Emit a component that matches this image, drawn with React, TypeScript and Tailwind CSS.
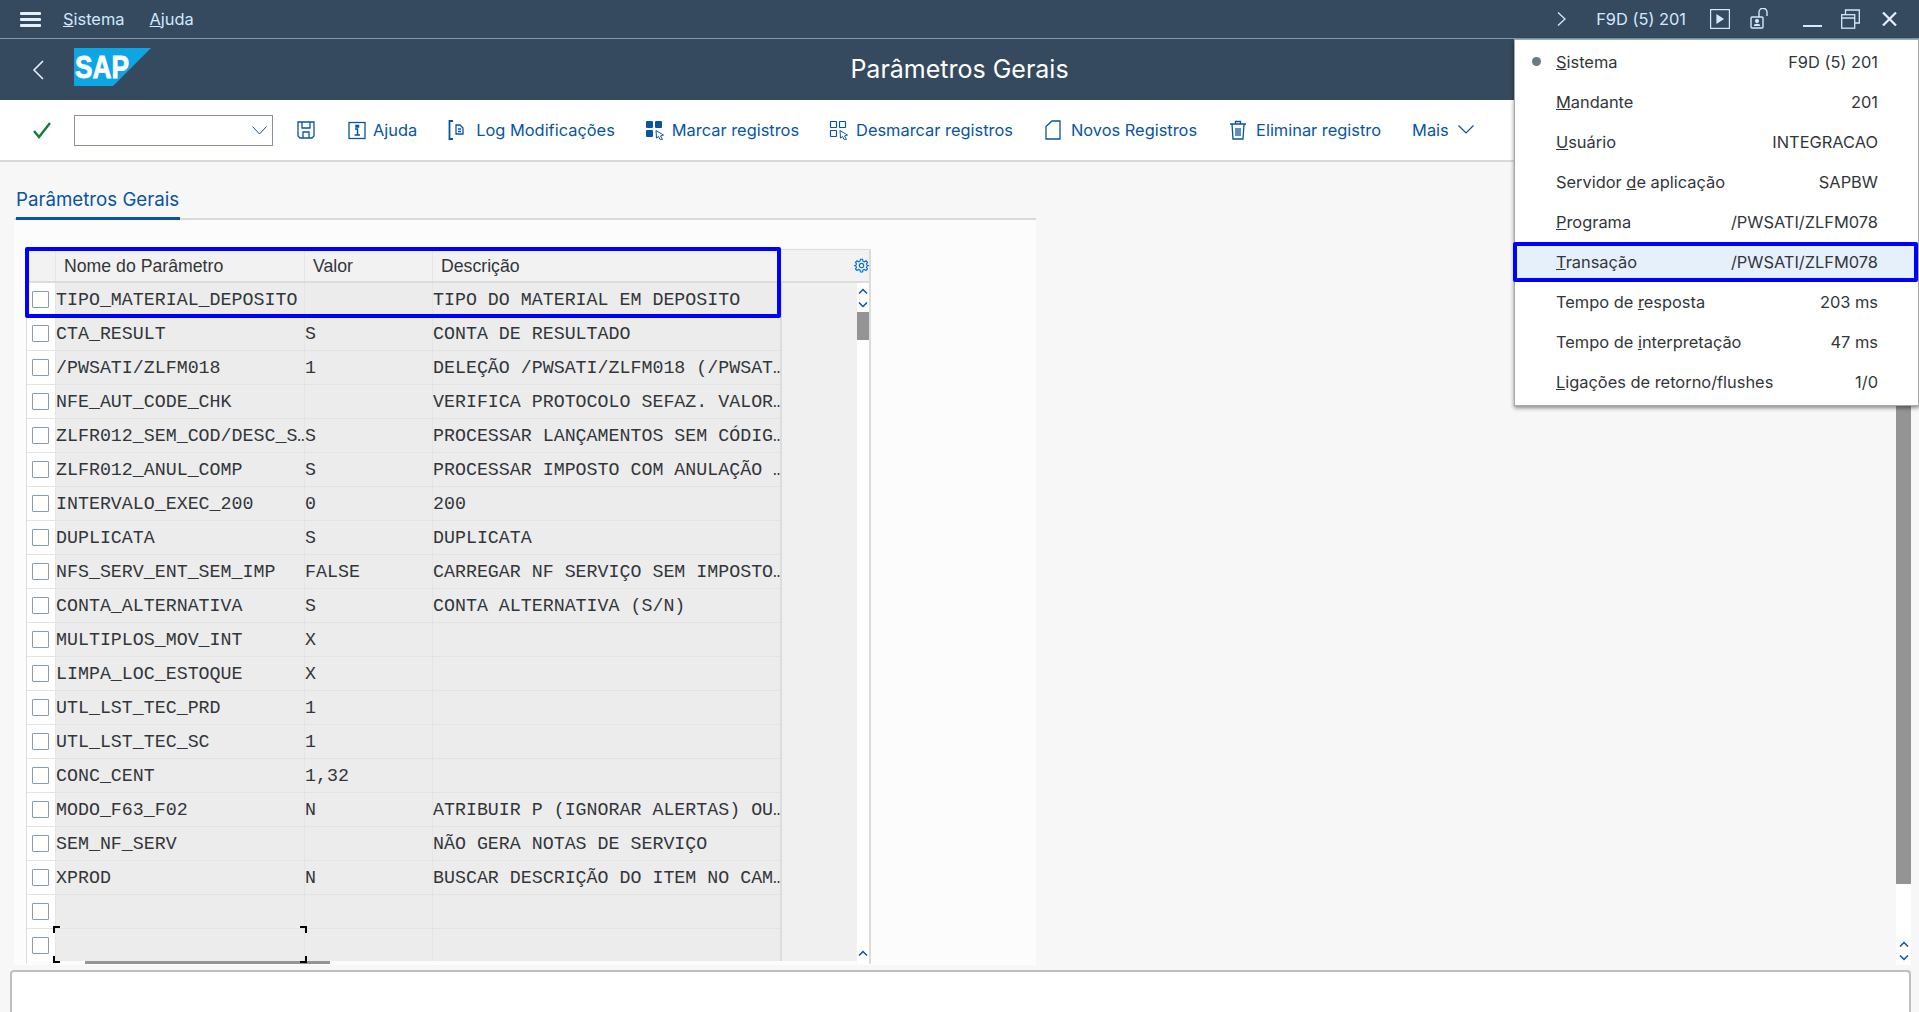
const rows = [
  ["TIPO_MATERIAL_DEPOSITO", "", "TIPO DO MATERIAL EM DEPOSITO"],
  ["CTA_RESULT", "S", "CONTA DE RESULTADO"],
  ["/PWSATI/ZLFM018", "1", "DELEÇÃO /PWSATI/ZLFM018 (/PWSAT…"],
  ["NFE_AUT_CODE_CHK", "", "VERIFICA PROTOCOLO SEFAZ. VALOR…"],
  ["ZLFR012_SEM_COD/DESC_S…", "S", "PROCESSAR LANÇAMENTOS SEM CÓDIG…"],
  ["ZLFR012_ANUL_COMP", "S", "PROCESSAR IMPOSTO COM ANULAÇÃO …"],
  ["INTERVALO_EXEC_200", "0", "200"],
  ["DUPLICATA", "S", "DUPLICATA"],
  ["NFS_SERV_ENT_SEM_IMP", "FALSE", "CARREGAR NF SERVIÇO SEM IMPOSTO…"],
  ["CONTA_ALTERNATIVA", "S", "CONTA ALTERNATIVA (S/N)"],
  ["MULTIPLOS_MOV_INT", "X", ""],
  ["LIMPA_LOC_ESTOQUE", "X", ""],
  ["UTL_LST_TEC_PRD", "1", ""],
  ["UTL_LST_TEC_SC", "1", ""],
  ["CONC_CENT", "1,32", ""],
  ["MODO_F63_F02", "N", "ATRIBUIR P (IGNORAR ALERTAS) OU…"],
  ["SEM_NF_SERV", "", "NÃO GERA NOTAS DE SERVIÇO"],
  ["XPROD", "N", "BUSCAR DESCRIÇÃO DO ITEM NO CAM…"],
  ["", "", ""],
  ["", "", ""],
];

const statusRows: [string, string, string, string][] = [
  ["", "S", "istema", "F9D (5) 201"],
  ["", "M", "andante", "201"],
  ["", "U", "suário", "INTEGRACAO"],
  ["Servidor ", "d", "e aplicação", "SAPBW"],
  ["", "P", "rograma", "/PWSATI/ZLFM078"],
  ["", "T", "ransação", "/PWSATI/ZLFM078"],
  ["Tempo de ", "r", "esposta", "203 ms"],
  ["Tempo de ", "i", "nterpretação", "47 ms"],
  ["", "L", "igações de retorno/flushes", "1/0"],
];

function Chevron({ up, className }: { up?: boolean; className?: string }) {
  return (
    <svg viewBox="0 0 10 6" className={className} fill="none" stroke="#0854a0" strokeWidth="1.5">
      <path d={up ? "M1 5.5 5 1.5l4 4" : "M1 .5l4 4 4-4"} />
    </svg>
  );
}

function ToolIcon({ children }: { children: React.ReactNode }) {
  return (
    <svg viewBox="0 0 20 20" className="w-5 h-5 shrink-0" fill="none" stroke="#0854a0" strokeWidth="1.3">
      {children}
    </svg>
  );
}

function ToolButton({ icon, label, gap, ml }: { icon: React.ReactNode; label: string; gap: string; ml: string }) {
  return (
    <div className={`flex items-center ${gap} ${ml}`}>
      {icon}
      <span className="whitespace-nowrap pt-[1px]">{label}</span>
    </div>
  );
}

function Corner({ className }: { className: string }) {
  return <div className={`absolute w-[7px] h-[7px] border-black ${className}`} />;
}

export default function App() {
  return (
    <div className="relative h-[1012px] w-full overflow-hidden flex flex-col bg-[#f7f7f7] font-['Inter',sans-serif] text-[16.4px]">
      {/* menu bar */}
      <div className="h-[39px] shrink-0 bg-[#354a5f] border-b border-[#7e9ab8] flex items-center text-[#d1e8ff] pr-[22px]">
        <svg viewBox="0 0 21 15" className="w-[21px] h-[15px] ml-[20px]" fill="#e4f0ff">
          <rect width="21" height="3" rx="1" />
          <rect y="6" width="21" height="3" rx="1" />
          <rect y="12" width="21" height="3" rx="1" />
        </svg>
        <span className="ml-[22px]"><u>S</u>istema</span>
        <span className="ml-[25px]"><u>A</u>juda</span>
        <svg viewBox="0 0 9 14" className="w-[9px] h-[14px] ml-auto" fill="none" stroke="#d1e8ff" strokeWidth="1.3">
          <path d="M1 .5 8 7l-7 6.5" />
        </svg>
        <span className="ml-[30px] whitespace-nowrap">F9D (5) 201</span>
        <svg viewBox="0 0 20 20" className="w-5 h-5 ml-[24px]" fill="none" stroke="#d1e8ff" strokeWidth="1.2">
          <rect x=".6" y=".6" width="18.8" height="18.8" />
          <path d="M7 6v8l6-4z" fill="#d1e8ff" />
        </svg>
        <svg viewBox="0 0 21 21" className="w-[21px] h-[21px] ml-[20px] -mt-[2px]" fill="none" stroke="#d1e8ff" strokeWidth="1.4">
          <rect x="1" y="9" width="12" height="11" rx="1" />
          <path d="M9 9V4.5a4 4 0 0 1 8-.5v4" />
          <circle cx="7" cy="13" r="1.4" fill="#d1e8ff" />
          <path d="M4.5 18c0-2 5-2 5 0" fill="#d1e8ff" />
        </svg>
        <div className="w-[19px] h-[2px] bg-[#d1e8ff] ml-[32px] mt-[14px]" />
        <svg viewBox="0 0 19 20" className="w-[19px] h-5 ml-[19px]" fill="none" stroke="#d1e8ff" strokeWidth="1.3">
          <rect x=".7" y="5.7" width="13" height="13.5" />
          <path d="M4.5 5V1h13.8v13H14M1 9h13" />
        </svg>
        <svg viewBox="0 0 15 14" className="w-[15px] h-[14px] ml-[22px]" fill="none" stroke="#e4f0ff" strokeWidth="2.2">
          <path d="M1 .5l13 13M14 .5l-13 13" />
        </svg>
      </div>

      {/* title bar */}
      <div className="relative h-[61px] shrink-0 bg-[#354a5f] flex items-center justify-center">
        <div className="absolute left-[32px] top-[21px]">
          <svg viewBox="0 0 12 20" className="w-3 h-5" fill="none" stroke="#e4f0ff" strokeWidth="1.6">
            <path d="M11 1 2 10l9 9" />
          </svg>
        </div>
        <svg viewBox="0 0 77 38" className="absolute left-[74px] top-[9px] w-[77px] h-[38px]">
          <polygon points="0,0 77,0 39,38 0,38" fill="#0ea5e4" />
          <text x="1" y="30" fill="#fff" stroke="#fff" strokeWidth=".8" fontFamily="Liberation Sans" fontWeight="700" fontSize="32" textLength="54" lengthAdjust="spacingAndGlyphs">SAP</text>
        </svg>
        <span className="text-white text-[25px]">Parâmetros Gerais</span>
      </div>

      {/* toolbar */}
      <div className="h-[62px] shrink-0 bg-white border-b-2 border-[#d9d9d9] flex items-center text-[#0854a0]">
        <svg viewBox="0 0 18 17" className="w-[18px] h-[17px] ml-[33px]" fill="none" stroke="#107e3e" strokeWidth="2.4">
          <path d="M1 9l5 6L17 1" />
        </svg>
        <div className="w-[199px] h-[31px] ml-[23px] bg-white border border-[#89919a] flex items-center justify-end pr-[5px]">
          <svg viewBox="0 0 15 9" className="w-[15px] h-[9px]" fill="none" stroke="#0854a0" strokeWidth="1">
            <path d="M.5 .5 7.5 8l7-7.500" />
          </svg>
        </div>
        <div className="ml-[23px]">
          <ToolIcon>
            <path d="M2 2h16v14l-2 2H4l-2-2zM6 2v6h8V2M7 18v-6h6v6" />
          </ToolIcon>
        </div>
        <ToolButton
          ml="ml-[31px]"
          gap="gap-[6px]"
          label="Ajuda"
          icon={
            <ToolIcon>
              <rect x="2" y="2.500" width="16" height="16" />
              <path d="M8 9h2.500v6M7.500 15h5.500M9 5.500h2.500v1.500H9z" strokeWidth="1.500" />
            </ToolIcon>
          }
        />
        <ToolButton
          ml="ml-[31px]"
          gap="gap-[12px]"
          label="Log Modificações"
          icon={
            <svg viewBox="0 0 16 20" className="w-4 h-5" fill="none" stroke="#0854a0" strokeWidth="1.300">
              <path d="M5 1H1.500v18H5" strokeWidth="1.800" />
              <path d="M8 5h4l3 3v6H8zM10 9h3M10 11.500h3" />
            </svg>
          }
        />
        <ToolButton
          ml="ml-[30px]"
          gap="gap-[7px]"
          label="Marcar registros"
          icon={
            <svg viewBox="0 0 20 20" className="w-5 h-5" fill="#0854a0" stroke="none">
              <rect x="1" y="1" width="7" height="7" rx="1" />
              <rect x="10" y="1" width="7" height="7" rx="1" />
              <rect x="1" y="10" width="7" height="7" rx="1" />
              <path d="M11 10.500l7.500 4.500-3 1 2 3.500-2 .5-2-3.500-2 1.500z" fill="none" stroke="#0854a0" strokeWidth="1" />
            </svg>
          }
        />
        <ToolButton
          ml="ml-[30px]"
          gap="gap-[7px]"
          label="Desmarcar registros"
          icon={
            <svg viewBox="0 0 20 20" className="w-5 h-5" fill="none" stroke="#0854a0" strokeWidth="1.200">
              <rect x="1.500" y="1.500" width="6" height="6" rx=".5" />
              <rect x="10.500" y="1.500" width="6" height="6" rx=".5" />
              <rect x="1.500" y="10.500" width="6" height="6" rx=".5" />
              <path d="M11 10.500l7.500 4.500-3 1 2 3.500-2 .5-2-3.500-2 1.500z" strokeWidth="1" />
            </svg>
          }
        />
        <ToolButton
          ml="ml-[32px]"
          gap="gap-[10px]"
          label="Novos Registros"
          icon={
            <svg viewBox="0 0 16 20" className="w-4 h-5" fill="none" stroke="#0854a0" strokeWidth="1.300">
              <path d="M1 6.500 7 1h8v18H1z" />
            </svg>
          }
        />
        <ToolButton
          ml="ml-[31px]"
          gap="gap-[8px]"
          label="Eliminar registro"
          icon={
            <ToolIcon>
              <path d="M2 4h16M7.500 4V1.500h5V4M4 4l1 15h10l1-15M8 8v8M10 8v8M12 8v8" />
            </ToolIcon>
          }
        />
        <div className="flex items-center ml-[31px] gap-[9px]">
          <span className="pt-[1px]">Mais</span>
          <svg viewBox="0 0 16 9" className="w-4 h-[9px]" fill="none" stroke="#0854a0" strokeWidth="1.200">
            <path d="M.5 .5l7.500 7.500 7.500-7.500" />
          </svg>
        </div>
      </div>

      {/* main area */}
      <div className="h-[808px] shrink-0 flex">
        <div className="w-[1896px] pl-[14px] pb-[5px] flex flex-col">
          {/* tab */}
          <div className="h-[58px] w-[1022px] shrink-0 border-b-2 border-[#d9d9d9] flex items-end">
            <div className="ml-[2px] -mb-[2px] w-[164px] h-[32px] border-b-[3px] border-[#0854a0] text-[#0854a0] text-[18.7px] leading-[24px] whitespace-nowrap">
              Parâmetros Gerais
            </div>
          </div>
          {/* panel */}
          <div className="w-[1022px] flex-1 bg-[#fcfcfc] pl-[12px] pt-[29px]">
            <div className="relative w-[845px] h-[715px] border-t border-r-2 border-l border-[#dcdcdc] flex flex-col font-['Liberation_Mono',monospace] text-[18.3px] text-[#32363a]">
              {/* header */}
              <div className="h-[33px] shrink-0 flex bg-[#f2f2f2] border-b-2 border-[#dcdcdc] font-['Liberation_Sans',sans-serif] text-[17.7px] items-stretch">
                <div className="w-[28px]" />
                <div className="w-[249px] border-l border-[#e5e5e5] pl-[8px] pt-[1px] flex items-center">Nome do Parâmetro</div>
                <div className="w-[128px] border-l border-[#e5e5e5] pl-[8px] pt-[1px] flex items-center">Valor</div>
                <div className="w-[349px] border-l border-[#e5e5e5] pl-[8px] pt-[1px] flex items-center border-r-2 border-r-[#dcdcdc]">Descrição</div>
                <div className="flex-1 flex items-center justify-end pb-[1px]">
                  <svg viewBox="0 0 24 24" className="w-[15px] h-[15px]" fill="none" stroke="#0a6ed1" strokeWidth="1.800">
                    <circle cx="12" cy="12" r="3.500" />
                    <path d="M10.300 2h3.400l.6 3 2.300 1 2.600-1.600 2.400 2.400L20 9.400l1 2.300 3 .3v0l-3 .6-1 2.400 1.600 2.600-2.400 2.400-2.600-1.600-2.300 1-.6 3h-3.400l-.6-3-2.300-1-2.600 1.600-2.400-2.400L4 15l-1-2.400-3-.6v0l3-.3 1-2.300L2.400 6.800l2.400-2.400L7.400 6l2.300-1z" />
                  </svg>
                </div>
              </div>
              {/* body */}
              <div className="flex-1 flex min-h-0">
                <div className="w-[753px] shrink-0 h-[678px] overflow-hidden">
                  {rows.map((r, i) => (
                    <div key={i} className="h-[34px] flex border-b border-[#e3e3e3] bg-[#ececec] leading-[34px]">
                      <div className="w-[28px] shrink-0 bg-white flex items-center justify-center pr-[1px]">
                        <div className="w-[17px] h-[17px] bg-white border border-[#8a9bae] rounded-[1px]" />
                      </div>
                      <div className="w-[249px] shrink-0 border-l border-[#e5e5e5] whitespace-nowrap overflow-hidden">{r[0]}</div>
                      <div className="w-[128px] shrink-0 border-l border-[#e5e5e5] whitespace-nowrap overflow-hidden">{r[1]}</div>
                      <div className="w-[348px] shrink-0 border-l border-[#e5e5e5] whitespace-nowrap overflow-hidden">{r[2]}</div>
                    </div>
                  ))}
                </div>
                <div className="w-[2px] h-[678px] bg-[#dcdcdc]" />
                <div className="w-[75px] h-[678px] bg-[#f0f0f0]" />
                {/* table scrollbar */}
                <div className="flex-1 bg-white flex flex-col items-center">
                  <Chevron up className="w-[10px] h-[6px] mt-[5px]" />
                  <Chevron className="w-[10px] h-[6px] mt-[8px]" />
                  <div className="w-full h-[28px] mt-[4px] bg-[#949494]" />
                  <div className="flex-1" />
                  <Chevron up className="w-[10px] h-[6px] mb-[8px]" />
                </div>
              </div>
              {/* horizontal scrollbar */}
              <div className="absolute left-[58px] top-[711px] w-[245px] h-[3px] bg-[#949494]" />
              {/* selection cursor */}
              <div className="absolute left-[26px] top-[676px] w-[254px] h-[37px]">
                <Corner className="left-0 top-0 border-l-2 border-t-2" />
                <Corner className="right-0 top-0 border-r-2 border-t-2" />
                <Corner className="left-0 bottom-0 border-l-2 border-b-2" />
                <Corner className="right-0 bottom-0 border-r-2 border-b-2" />
              </div>
              {/* highlight */}
              <div className="absolute left-[-2px] top-[-3px] w-[756px] h-[71px] border-[4px] border-[#0000ff] rounded-[2px]" />
            </div>
          </div>
        </div>
        {/* page scrollbar */}
        <div className="w-[15px] h-[803px] bg-white flex flex-col items-center">
          <div className="w-full h-[722px] bg-[#949494]" />
          <div className="flex-1" />
          <Chevron up className="w-[10px] h-[6px] mb-[8px]" />
          <Chevron className="w-[10px] h-[6px] mb-[4px]" />
        </div>
      </div>

      {/* bottom box */}
      <div className="flex-1 ml-[10px] mr-[8px] bg-white border-t-2 border-x-2 border-[#bfbfbf] rounded-t-[4px]" />

      {/* status popup */}
      <div className="absolute left-[1514px] top-[39px] right-0 h-[367px] bg-white border border-[#a8a8a8] shadow-[0_2px_4px_rgba(0,0,0,0.45)] pt-[2px] text-[#32363a]">
        {statusRows.map((r, i) => (
          <div
            key={i}
            className={`relative h-[40px] flex items-center justify-between pl-[41px] pr-[40px] ${i === 5 ? "bg-[#e5f0fa]" : ""}`}
          >
            {i === 0 && <div className="absolute left-[17px] top-[15px] w-[9px] h-[9px] rounded-full bg-[#6a7a80]" />}
            <span className="whitespace-nowrap">
              {r[0]}
              <u>{r[1]}</u>
              {r[2]}
            </span>
            <span className="whitespace-nowrap">{r[3]}</span>
            {i === 5 && <div className="absolute -left-[2px] right-0 top-0 bottom-0 border-[4px] border-[#0000ff] rounded-[2px]" />}
          </div>
        ))}
      </div>
    </div>
  );
}
